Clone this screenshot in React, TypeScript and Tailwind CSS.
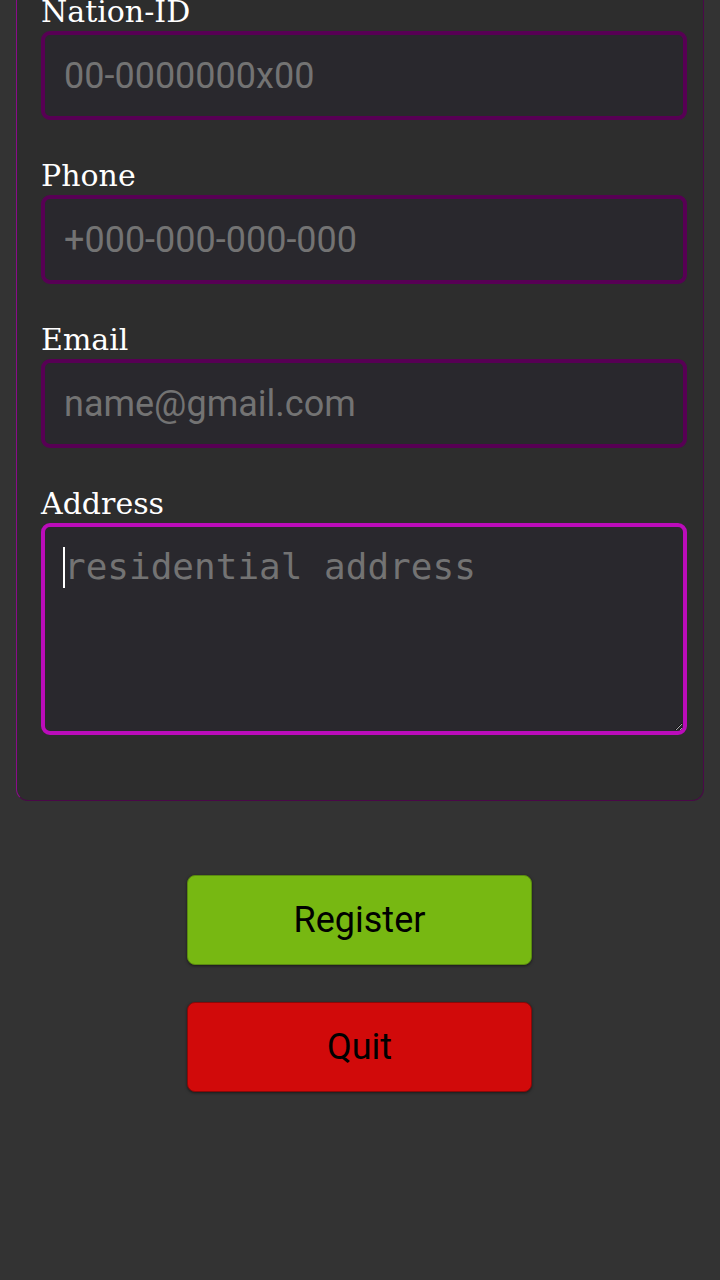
import React from "react";

const labelCls =
  "block text-white text-[30px] leading-[38px] font-['DejaVu_Serif',serif]";
const inputCls =
  "block w-full h-[89px] bg-[#29282d] border-[4px] border-[#570054] rounded-[9px] pl-[19px] text-[36px] text-white placeholder:text-[#737373] font-['Roboto',sans-serif] outline-none";

function Field({ label, placeholder }: { label: string; placeholder: string }) {
  return (
    <div className="mb-[37px]">
      <label className={labelCls}>{label}</label>
      <input className={inputCls} placeholder={placeholder} readOnly />
    </div>
  );
}

export default function App() {
  return (
    <div className="min-h-[1280px] w-[720px] bg-[#333333] overflow-hidden">
      <div className="mx-4 -mt-[40px] pt-[32px] pl-[24px] pr-[16px] pb-[65px] bg-[#2d2d2d] border border-[#4a0848] border-l-[#8a0c8a] rounded-[12px]">
        <Field label="Nation-ID" placeholder="00-0000000x00" />
        <Field label="Phone" placeholder="+000-000-000-000" />
        <Field label="Email" placeholder="name@gmail.com" />
        <div>
          <label className={labelCls}>Address</label>
          <div className="relative">
            <textarea
              className="block w-full h-[212px] bg-[#29282d] border-[4px] border-[#bb0cba] rounded-[9px] pl-[19px] pt-[16px] text-[36px] leading-[48px] text-white placeholder:text-[#737373] font-['DejaVu_Sans_Mono',monospace] outline-none resize-y"
              placeholder="residential address"
              readOnly
            />
            <div className="absolute left-[22px] top-[24px] w-[2px] h-[41px] bg-white" />
          </div>
        </div>
      </div>
      <div className="flex flex-col items-center mt-[74px] gap-[37px]">
        <button className="w-[345px] h-[90px] -ml-[1px] rounded-[8px] bg-[#77b812] border border-[#5a8a10] shadow-[0_1px_3px_rgba(0,0,0,0.5)] text-black text-[36px] font-['Roboto',sans-serif]">
          Register
        </button>
        <button className="w-[345px] h-[90px] -ml-[1px] rounded-[8px] bg-[#d10a0a] border border-[#8a0808] shadow-[0_1px_3px_rgba(0,0,0,0.5)] text-black text-[36px] font-['Roboto',sans-serif]">
          Quit
        </button>
      </div>
    </div>
  );
}
